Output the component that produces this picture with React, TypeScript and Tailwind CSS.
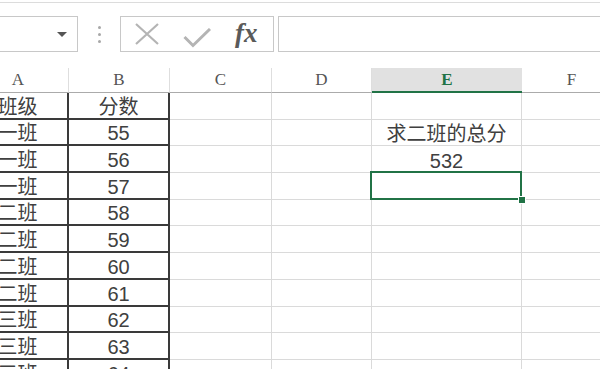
import React from "react";

const cols = ["A", "B", "C", "D", "E", "F"];

const rows: { a: string; b: string; e?: string }[] = [
  { a: "班级", b: "分数" },
  { a: "一班", b: "55", e: "求二班的总分" },
  { a: "一班", b: "56", e: "532" },
  { a: "一班", b: "57" },
  { a: "二班", b: "58" },
  { a: "二班", b: "59" },
  { a: "二班", b: "60" },
  { a: "二班", b: "61" },
  { a: "三班", b: "62" },
  { a: "三班", b: "63" },
  { a: "三班", b: "64" },
];

const cellFont = { fontFamily: '"Liberation Sans", "Noto Sans CJK SC", sans-serif' };

function FormulaBar() {
  return (
    <div className="border-t border-[#dcdcdc] mt-[2px] pt-[13px] flex items-stretch h-[51px]">
      <div className="w-[78px] h-[36px] border-y border-r border-[#c8c8c8] flex items-center justify-end pr-[10px]">
        <div className="w-0 h-0 border-l-[5px] border-r-[5px] border-t-[5px] border-l-transparent border-r-transparent border-t-[#555]" />
      </div>
      <div className="w-[42px] flex flex-col items-center justify-center gap-[4px]">
        <div className="w-[3px] h-[3px] rounded-full bg-[#a8a8a8]" />
        <div className="w-[3px] h-[3px] rounded-full bg-[#a8a8a8]" />
        <div className="w-[3px] h-[3px] rounded-full bg-[#a8a8a8]" />
      </div>
      <div className="w-[154px] h-[36px] border border-[#c8c8c8] flex items-center">
        <svg width="24" height="22" viewBox="0 0 24 22" className="ml-[14px]">
          <path d="M1 1 L23 21 M23 1 L1 21" stroke="#b4b4b4" strokeWidth="2.2" fill="none" />
        </svg>
        <svg width="28" height="20" viewBox="0 0 28 20" className="ml-[24px] mt-[8px]">
          <path d="M1.5 9 L10 17.5 L27 1" stroke="#b4b4b4" strokeWidth="3" fill="none" />
        </svg>
        <span
          className="ml-[24px] italic font-bold text-[27px] leading-none text-[#5a5a5a] -mt-[2px]"
          style={{ fontFamily: '"Liberation Serif", serif' }}
        >
          fx
        </span>
      </div>
      <div className="ml-[4px] flex-1 h-[36px] border-y border-l border-[#c8c8c8]" />
    </div>
  );
}

function Sheet() {
  return (
    <div className="mt-[15px] overflow-hidden w-[600px]">
      <div className="grid grid-cols-[101px_101px_102px_100px_150px_100px] -ml-[32px] w-[654px]">
        {cols.map((c) => (
          <div
            key={c}
            className={
              c === "E"
                ? "h-[25px] bg-[#e1e1e1] border-b-2 border-[#217346] flex items-center justify-center text-[#217346] font-bold text-[17px]"
                : "h-[25px] border-r border-b border-r-[#dedede] border-b-[#ababab] flex items-center justify-center text-[#555] text-[17px]"
            }
            style={{ fontFamily: '"Liberation Serif", serif' }}
          >
            {c}
          </div>
        ))}
        {rows.map((r, i) => (
          <React.Fragment key={i}>
            <div
              className="h-[26.7px] border-r-2 border-b-2 border-[#3a3a3a] flex items-end justify-center text-[20px] leading-none text-[#404040] pb-[1px]"
              style={cellFont}
            >
              {r.a}
            </div>
            <div
              className="h-[26.7px] border-r-2 border-b-2 border-[#3a3a3a] flex items-end justify-center text-[20px] leading-none text-[#404040] pb-[1px]"
              style={cellFont}
            >
              {r.b}
            </div>
            <div className="h-[26.7px] border-r border-b border-[#dadada]" />
            <div className="h-[26.7px] border-r border-b border-[#dadada]" />
            <div
              className={`h-[26.7px] border-r border-b border-[#dadada] flex items-end justify-center text-[20px] leading-none text-[#404040] pb-[1px] ${i === 3 ? "relative z-10" : ""}`}
              style={cellFont}
            >
              {r.e}
              {i === 3 && (
                <>
                  <div className="absolute -left-[2px] -top-[2px] -right-[1px] -bottom-px border-2 border-[#217346]" />
                  <div className="absolute -right-[5px] -bottom-[5px] w-[8px] h-[8px] bg-[#217346] border border-white" />
                </>
              )}
            </div>
            <div className="h-[26.7px] border-r border-b border-[#dadada]" />
          </React.Fragment>
        ))}
      </div>
    </div>
  );
}

export default function App() {
  return (
    <div className="w-[600px] h-[369px] overflow-hidden bg-white">
      <FormulaBar />
      <Sheet />
    </div>
  );
}
